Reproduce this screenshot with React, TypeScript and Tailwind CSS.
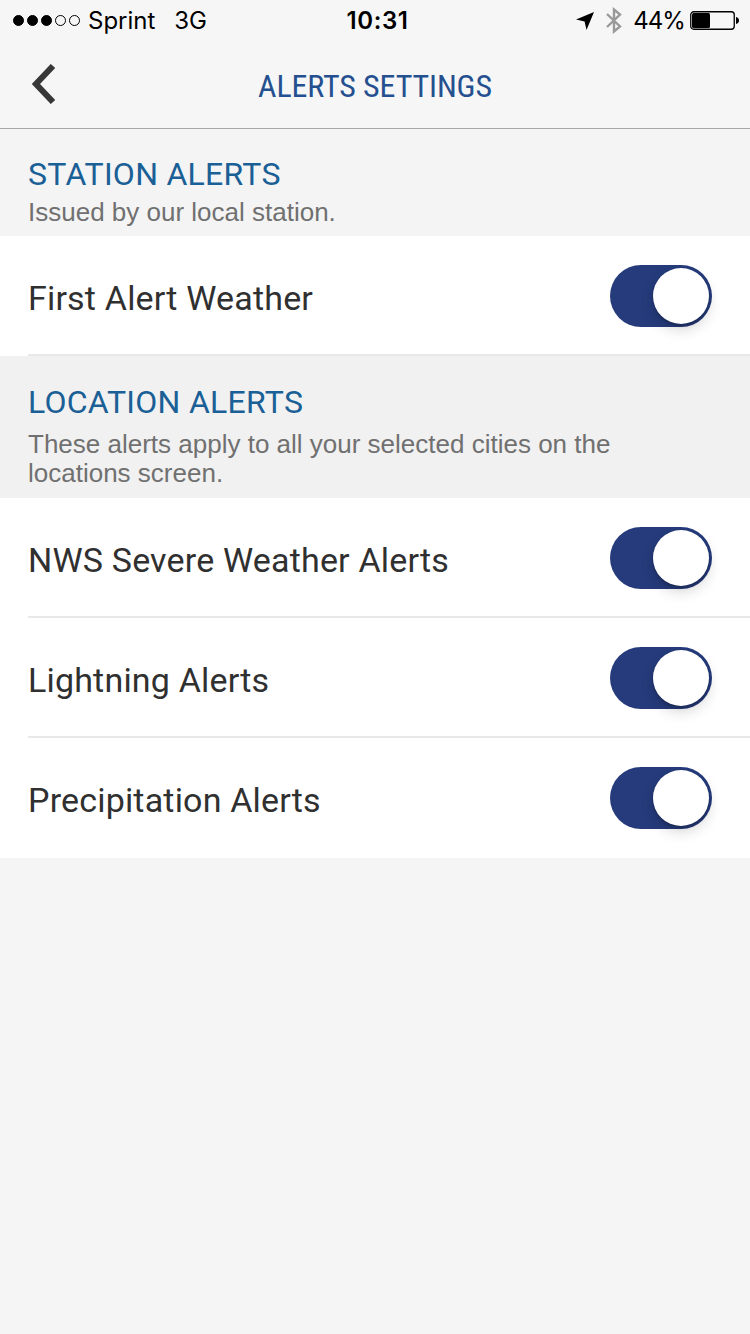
import React, { useState } from "react";
import { clsx } from "clsx";

const stationAlerts = [{ id: "first-alert", name: "First Alert Weather" }];

const locationAlerts = [
  { id: "nws", name: "NWS Severe Weather Alerts" },
  { id: "lightning", name: "Lightning Alerts" },
  { id: "precipitation", name: "Precipitation Alerts" },
];

function StatusBar() {
  return (
    <div className="grid h-10 grid-cols-3 items-center pt-[2px] font-['Inter',sans-serif] text-[24px] leading-[38px] text-black">
      <div className="flex items-center whitespace-nowrap pl-[13px]">
        <div className="flex gap-[3px] pb-[2px]">
          {[0, 1, 2, 3, 4].map((dot) => (
            <span
              key={dot}
              className={clsx(
                "h-[11px] w-[11px] rounded-full border border-black",
                dot < 3 && "bg-black"
              )}
            />
          ))}
        </div>
        <span className="ml-[8px]">Sprint</span>
        <span className="ml-[19px] tracking-[-0.3px]">3G</span>
      </div>
      <div className="pl-[5px] text-center font-semibold tracking-[0.6px]">10:31</div>
      <div className="flex items-center justify-end whitespace-nowrap pr-[11px]">
        <svg width="18" height="18" viewBox="0 0 18 18" className="mr-[12px]">
          <path d="M18 0 10.5 18 8.6 9.4 0 7.6Z" fill="#000" />
        </svg>
        <svg width="16" height="27" viewBox="0 0 16 27" fill="none" stroke="#999" strokeWidth="2.4" className="mb-px mr-[11px]">
          <path d="M1 7 14 19.5 8 24.5V2.5L14 7.5 1 20" />
        </svg>
        <span className="mr-[5px] tracking-[-0.9px]">44%</span>
        <svg width="49" height="19" viewBox="0 0 49 19" className="mb-[2px]">
          <rect x="0.75" y="0.75" width="43.5" height="17.5" rx="3" fill="none" stroke="#000" strokeWidth="1.3" />
          <rect x="2" y="2" width="18" height="15" rx="1.5" fill="#000" />
          <path d="M46 6c2 .4 3 1.600 3 3.500s-1 3.100-3 3.500Z" fill="#000" />
        </svg>
      </div>
    </div>
  );
}

function Header() {
  return (
    <header className="h-[129px] border-b border-[#a9a9a9] bg-[#f6f6f6]">
      <StatusBar />
      <div className="grid h-[88px] grid-cols-[100px_1fr_100px] items-center">
        <button aria-label="Back" className="pl-[32px]">
          <svg width="24" height="40" viewBox="0 0 24 40" fill="none" stroke="#373737" strokeWidth="6">
            <path d="M21 2 4 20 21 38" />
          </svg>
        </button>
        <h1 className="pt-[4px] text-center font-['Roboto_Condensed','Roboto',sans-serif] text-[32px] leading-[40px] tracking-[-0.1px] text-[#25508f] [font-stretch:75%]">
          ALERTS SETTINGS
        </h1>
      </div>
    </header>
  );
}

function Toggle({ label }: { label: string }) {
  const [on, setOn] = useState(true);

  return (
    <button
      role="switch"
      aria-checked={on}
      aria-label={label}
      onClick={() => setOn(!on)}
      className={clsx(
        "mt-[2px] flex h-[62px] w-[102px] items-center rounded-full px-[3px]",
        on ? "justify-end bg-[#253b7b]" : "justify-start bg-gray-300"
      )}
    >
      <span className="h-[56px] w-[56px] rounded-full bg-white shadow-[0_6px_14px_rgba(0,0,0,0.16),0_2px_3px_rgba(0,0,0,0.2)]" />
    </button>
  );
}

function AlertRows({ alerts, lastLine }: { alerts: { id: string; name: string }[]; lastLine?: boolean }) {
  return (
    <ul className="bg-white pl-[28px]">
      {alerts.map((alert, i) => (
        <li
          key={alert.id}
          className={clsx(
            "flex h-[120px] items-center justify-between border-b-2 pr-[38px]",
            i < alerts.length - 1 || lastLine ? "border-[#e8e8e8]" : "border-transparent"
          )}
        >
          <span className="pt-[6px] text-[34px] leading-[40px] tracking-[0.18px] text-[#303030]">{alert.name}</span>
          <Toggle label={alert.name} />
        </li>
      ))}
    </ul>
  );
}

export default function App() {
  return (
    <div className="min-h-[1334px] w-full bg-[#f5f5f5] font-['Roboto',sans-serif]">
      <Header />
      <section>
        <div className="h-[107px] bg-[#f4f4f4] pl-[28px] pt-[25px]">
          <h2 className="text-[32px] leading-[40px] tracking-[0.27px] text-[#1a5f96]">STATION ALERTS</h2>
          <p className="mt-[4px] font-['Liberation_Sans',sans-serif] text-[26px] leading-[29px] text-[#707070]">
            Issued by our local station.
          </p>
        </div>
        <AlertRows alerts={stationAlerts} lastLine />
      </section>
      <section>
        <div className="h-[142px] bg-[#f1f1f1] pl-[28px] pt-[26px]">
          <h2 className="text-[32px] leading-[40px] tracking-[0.27px] text-[#1a5f96]">LOCATION ALERTS</h2>
          <p className="mt-[8px] w-[600px] font-['Liberation_Sans',sans-serif] text-[26px] leading-[29px] text-[#707070]">
            These alerts apply to all your selected cities on the locations screen.
          </p>
        </div>
        <AlertRows alerts={locationAlerts} />
      </section>
    </div>
  );
}
